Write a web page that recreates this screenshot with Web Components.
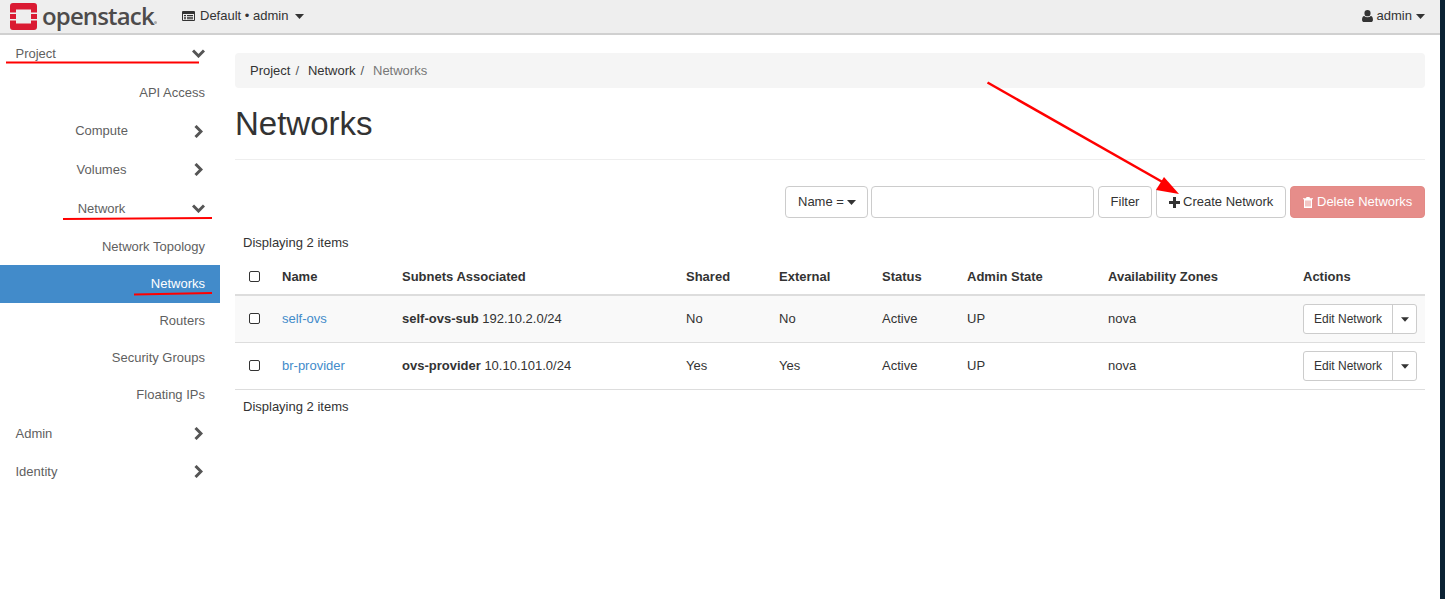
<!DOCTYPE html>
<html lang="en">
<head>
<meta charset="utf-8">
<title>Networks</title>
<style>
html, body { margin: 0; height: 100%; background: #fff; }
body { font: 13px/1.43 "Liberation Sans", Arial, sans-serif; color: #333; overflow: hidden; }
</style>
</head>
<body>
<os-app>
  <os-navbar slot="top"></os-navbar>
  <os-sidebar slot="side">
    <os-nav-item kind="top" chevron="down" style="--h:38.5px">Project</os-nav-item>
    <os-nav-item kind="leaf" style="--h:39px">API Access</os-nav-item>
    <os-nav-item kind="group" chevron="right" style="--h:38px">Compute</os-nav-item>
    <os-nav-item kind="group" chevron="right" style="--h:39px">Volumes</os-nav-item>
    <os-nav-item kind="group" chevron="down" style="--h:39.5px">Network</os-nav-item>
    <os-nav-item kind="leaf" style="--h:36px">Network Topology</os-nav-item>
    <os-nav-item kind="leaf" active style="--h:38px">Networks</os-nav-item>
    <os-nav-item kind="leaf">Routers</os-nav-item>
    <os-nav-item kind="leaf">Security Groups</os-nav-item>
    <os-nav-item kind="leaf">Floating IPs</os-nav-item>
    <os-nav-item kind="top" chevron="right" style="--h:40px">Admin</os-nav-item>
    <os-nav-item kind="top" chevron="right" style="--h:36px">Identity</os-nav-item>
  </os-sidebar>
  <os-breadcrumb></os-breadcrumb>
  <os-page-header>Networks</os-page-header>
  <os-table-actions></os-table-actions>
  <os-network-table>
    <os-network-row name="self-ovs" subnet="self-ovs-sub" cidr="192.10.2.0/24" shared="No" external="No" striped></os-network-row>
    <os-network-row name="br-provider" subnet="ovs-provider" cidr="10.10.101.0/24" shared="Yes" external="Yes"></os-network-row>
  </os-network-table>
  <os-annotations slot="over"></os-annotations>
</os-app>

<script>
const caret = '<svg class="caret" width="9" height="5" viewBox="0 0 9 5"><path d="M0 0h9L4.5 5z" fill="currentColor"/></svg>';

class OsApp extends HTMLElement {
  constructor() {
    super();
    this.attachShadow({ mode: 'open' });
    this.shadowRoot.innerHTML = `
<style>
:host { display: flex; position: relative; height: 599px; overflow: hidden; }
.page { flex: 1; min-width: 0; display: flex; flex-direction: column; }
.body { flex: 1; display: flex; min-height: 0; }
.side { flex: 0 0 220px; }
main { flex: 1; min-width: 0; padding: 18px 15px 0; }
.strip { flex: 0 0 5px; background: #0b2233; }
</style>
<div class="page">
  <slot name="top"></slot>
  <div class="body">
    <div class="side"><slot name="side"></slot></div>
    <main><slot></slot></main>
  </div>
</div>
<div class="strip"></div>
<slot name="over"></slot>`;
  }
}

class OsNavbar extends HTMLElement {
  constructor() {
    super();
    this.attachShadow({ mode: 'open' });
    this.shadowRoot.innerHTML = `
<style>
:host { display: flex; align-items: center; height: 33px; padding: 0 15px 0 10px; background: #eee; border-bottom: 2px solid #d0d0d0; color: #333; }
.logo { display: flex; align-items: center; width: 172px; flex: none; }
.word { font: 600 24px/29px "Open Sans", sans-serif; color: #4d4b4b; letter-spacing: -.85px; margin: 0 0 2px 5px; }
.dot { display: inline-block; width: 3px; height: 3px; border-radius: 50%; background: #aaa; margin: 12px 0 0 0; }
.ctx { display: flex; align-items: center; gap: 5px; }
.ctx .caret { margin-left: 2px; }
.user { margin-left: auto; display: flex; align-items: center; gap: 4px; }
</style>
<div class="logo">
  <svg width="27" height="27" viewBox="0 0 27 27">
    <path fill="#da1a32" d="M3 0h21a3 3 0 0 1 3 3v6.500h-6V6.500H6v3H0V3a3 3 0 0 1 3-3zM0 11h6v5H0zM21 11h6v5h-6zM0 17.500h6v3h15v-3h6V24a3 3 0 0 1-3 3H3a3 3 0 0 1-3-3z"/>
  </svg>
  <span class="word">openstack</span><span class="dot"></span>
</div>
<div class="ctx">
  <svg width="13" height="10" viewBox="0 0 13 10"><path fill="#333" fill-rule="evenodd" d="M1 0h11a1 1 0 0 1 1 1v8a1 1 0 0 1-1 1H1a1 1 0 0 1-1-1V1a1 1 0 0 1 1-1zm0 3v6h11V3zm1 1h2v1H2zm3 0h6v1H5zM2 5.700h2v1H2zm3 0h6v1H5zM2 7.300h2v1H2zm3 0h6v1H5z"/></svg>
  <span>Default • admin</span>${caret}
</div>
<div class="user">
  <svg width="11" height="12" viewBox="0 0 10 11"><path fill="#333" d="M5 0a2.800 2.800 0 0 1 2.800 2.900A2.800 2.800 0 0 1 5 5.800a2.800 2.800 0 0 1-2.800-2.900A2.800 2.800 0 0 1 5 0zM2 5.600C2.800 6.300 3.800 6.700 5 6.700s2.200-.4 3-1.100c1.300.2 2 1.400 2 3.300 0 1.300-.8 2.100-1.900 2.100H1.900C.8 11 0 10.200 0 8.900c0-1.900.7-3.100 2-3.300z"/></svg>
  <span>admin</span>${caret}
</div>`;
  }
}

class OsSidebar extends HTMLElement {
  constructor() {
    super();
    this.attachShadow({ mode: 'open' });
    this.shadowRoot.innerHTML = `
<style>:host { display: flex; flex-direction: column; width: 220px; }</style>
<slot></slot>`;
  }
}

class OsNavItem extends HTMLElement {
  constructor() {
    super();
    this.attachShadow({ mode: 'open' });
    this.shadowRoot.innerHTML = `
<style>
:host { display: flex; align-items: center; height: var(--h, 37px); color: #5f5f5f; position: relative; box-sizing: border-box; }
:host([kind="top"]) { padding-left: 15.500px; }
:host([kind="group"]) { justify-content: center; padding-right: 17px; }
:host([kind="leaf"]) { justify-content: flex-end; padding-right: 15px; }
:host([active]) { background: #428bca; color: #fff; }
svg { position: absolute; top: 50%; fill: none; stroke: #555; stroke-width: 3; }
svg.down { right: 15px; width: 13px; height: 9px; margin-top: -5px; }
svg.right { right: 17px; width: 9px; height: 13px; margin-top: -7px; }
</style>
<slot></slot><span id="icon"></span>`;
  }

  connectedCallback() {
    const dir = this.getAttribute('chevron');
    if (dir === 'down') {
      this.shadowRoot.querySelector('#icon').innerHTML = '<svg class="down" viewBox="0 0 13 9"><path d="M1 1.500l5.500 5.500 5.500-5.500"/></svg>';
    } else if (dir === 'right') {
      this.shadowRoot.querySelector('#icon').innerHTML = '<svg class="right" viewBox="0 0 9 13"><path d="M1.500 1l5.500 5.500-5.500 5.500"/></svg>';
    }
  }
}

class OsBreadcrumb extends HTMLElement {
  constructor() {
    super();
    this.attachShadow({ mode: 'open' });
    this.shadowRoot.innerHTML = `
<style>
:host { display: flex; align-items: center; height: 33px; padding: 2px 15px 0; background: #f5f5f5; border-radius: 4px; color: #333; }
i { font-style: normal; color: #555; padding: 0 5px; }
i + span { margin-left: 3.800px; }
.cur { color: #777; }
</style>
<span>Project</span><i>/</i><span>Network</span><i>/</i><span class="cur">Networks</span>`;
  }
}

class OsPageHeader extends HTMLElement {
  constructor() {
    super();
    this.attachShadow({ mode: 'open' });
    this.shadowRoot.innerHTML = `
<style>
:host { display: block; height: 71px; border-bottom: 1px solid #eee; margin-bottom: 26px; }
h1 { margin: 0; padding-top: 17px; font: 400 33px/38px "Liberation Sans", sans-serif; color: #333; }
</style>
<h1><slot></slot></h1>`;
  }
}

class OsTableActions extends HTMLElement {
  constructor() {
    super();
    this.attachShadow({ mode: 'open' });
    this.shadowRoot.innerHTML = `
<style>
:host { display: flex; justify-content: flex-end; gap: 4px; height: 32px; }
button, input { box-sizing: border-box; height: 32px; border: 1px solid #ccc; border-radius: 4px; background: #fff; font: 13px "Liberation Sans", sans-serif; color: #333; padding: 0 12px 2px; margin: 0; display: flex; align-items: center; white-space: nowrap; }
.name { width: 83px; gap: 3px; margin-right: -1px; }
input { width: 223px; }
.filter { width: 54px; justify-content: center; }
.create { width: 130px; gap: 3px; }
.delete { width: 135px; gap: 4px; background: #e68d8a; border-color: #e38a86; color: #fff; }
button svg { flex: none; margin-top: 2px; }
</style>
<button class="name">Name = ${caret}</button>
<input type="text">
<button class="filter">Filter</button>
<button class="create"><svg width="11" height="11" viewBox="0 0 11 11"><path fill="#333" d="M4 0h3v4h4v3H7v4H4V7H0V4h4z"/></svg>Create Network</button>
<button class="delete"><svg width="10" height="11" viewBox="0 0 10 11"><path fill="#fff" fill-rule="evenodd" d="M3.500 0h3L7 1.300h3v1H9V11H1V2.300H0v-1h3zM2.500 3.500v6h1v-6zm2 0v6h1v-6zm2 0v6h1v-6z"/></svg>Delete Networks</button>`;
  }
}

const tableColumns = '39px 120px 284px 93px 103px 85px 141px 195px 130px';
const checkboxStyle = 'input { appearance: none; box-sizing: border-box; margin: 0 0 2px; width: 11px; height: 11px; background: #fff; border: 1px solid #333; border-radius: 2px; }';

class OsNetworkTable extends HTMLElement {
  constructor() {
    super();
    this.attachShadow({ mode: 'open' });
    this.shadowRoot.innerHTML = `
<style>
:host { display: block; }
.count { height: 24px; line-height: 18px; padding: 16px 8px 0; }
.head { display: grid; grid-template-columns: ${tableColumns}; height: 34px; padding-top: 2px; align-items: center; border-bottom: 2px solid #ddd; font-weight: 700; }
.head > * { padding-left: 8px; }
.head .check { padding-left: 14px; display: flex; }
${checkboxStyle}
.foot { height: 34px; line-height: 18px; padding: 8px 8px 0; box-sizing: border-box; }
</style>
<div class="count">Displaying 2 items</div>
<div class="head">
  <div class="check"><input type="checkbox"></div>
  <div>Name</div><div>Subnets Associated</div><div>Shared</div><div>External</div><div>Status</div><div>Admin State</div><div>Availability Zones</div><div>Actions</div>
</div>
<slot></slot>
<div class="foot">Displaying 2 items</div>`;
  }
}

class OsNetworkRow extends HTMLElement {
  constructor() {
    super();
    this.attachShadow({ mode: 'open' });
    this.shadowRoot.innerHTML = `
<style>
:host { display: grid; grid-template-columns: ${tableColumns}; height: 46px; align-items: center; border-bottom: 1px solid #ddd; }
:host([striped]) { background: #f9f9f9; }
.cell { padding-left: 8px; }
.check { padding-left: 14px; display: flex; }
${checkboxStyle}
a { color: #428bca; text-decoration: none; }
.actions { display: flex; justify-content: flex-end; padding: 0 8px 0 0; }
.group { display: flex; height: 30px; box-sizing: border-box; border: 1px solid #ccc; border-radius: 3px; background: #fff; font-size: 12px; align-items: center; white-space: nowrap; }
.edit { padding: 0 10px; line-height: 28px; border-right: 1px solid #ccc; }
.more { width: 23px; display: flex; justify-content: center; }
.more .caret { width: 8px; }
</style>
<div class="check"><input type="checkbox"></div>
<div class="cell"><a id="name"></a></div>
<div class="cell"><b id="subnet"></b> <span id="cidr"></span></div>
<div class="cell" id="shared"></div>
<div class="cell" id="external"></div>
<div class="cell">Active</div>
<div class="cell">UP</div>
<div class="cell">nova</div>
<div class="actions"><div class="group"><span class="edit">Edit Network</span><span class="more">${caret}</span></div></div>`;
  }

  connectedCallback() {
    for (const key of ['name', 'subnet', 'cidr', 'shared', 'external']) {
      this.shadowRoot.querySelector('#' + key).innerText = this.getAttribute(key);
    }
  }
}

class OsAnnotations extends HTMLElement {
  constructor() {
    super();
    this.attachShadow({ mode: 'open' });
    this.shadowRoot.innerHTML = `
<style>
:host { position: absolute; inset: 0; pointer-events: none; display: block; }
svg { display: block; }
</style>
<svg width="1445" height="599" viewBox="0 0 1445 599">
  <g stroke="#f00" stroke-width="2" fill="none">
    <path d="M6 62.500L199 62.500"/>
    <path d="M63 219L212 218"/>
    <path d="M134 294.500L212 293"/>
    <path stroke-width="2.500" d="M987.500 82.500L1166 184"/>
  </g>
  <path fill="#f00" d="M1164 177L1179 194L1156 190z"/>
</svg>`;
  }
}

customElements.define('os-app', OsApp);
customElements.define('os-navbar', OsNavbar);
customElements.define('os-sidebar', OsSidebar);
customElements.define('os-nav-item', OsNavItem);
customElements.define('os-breadcrumb', OsBreadcrumb);
customElements.define('os-page-header', OsPageHeader);
customElements.define('os-table-actions', OsTableActions);
customElements.define('os-network-table', OsNetworkTable);
customElements.define('os-network-row', OsNetworkRow);
customElements.define('os-annotations', OsAnnotations);
</script>
</body>
</html>
